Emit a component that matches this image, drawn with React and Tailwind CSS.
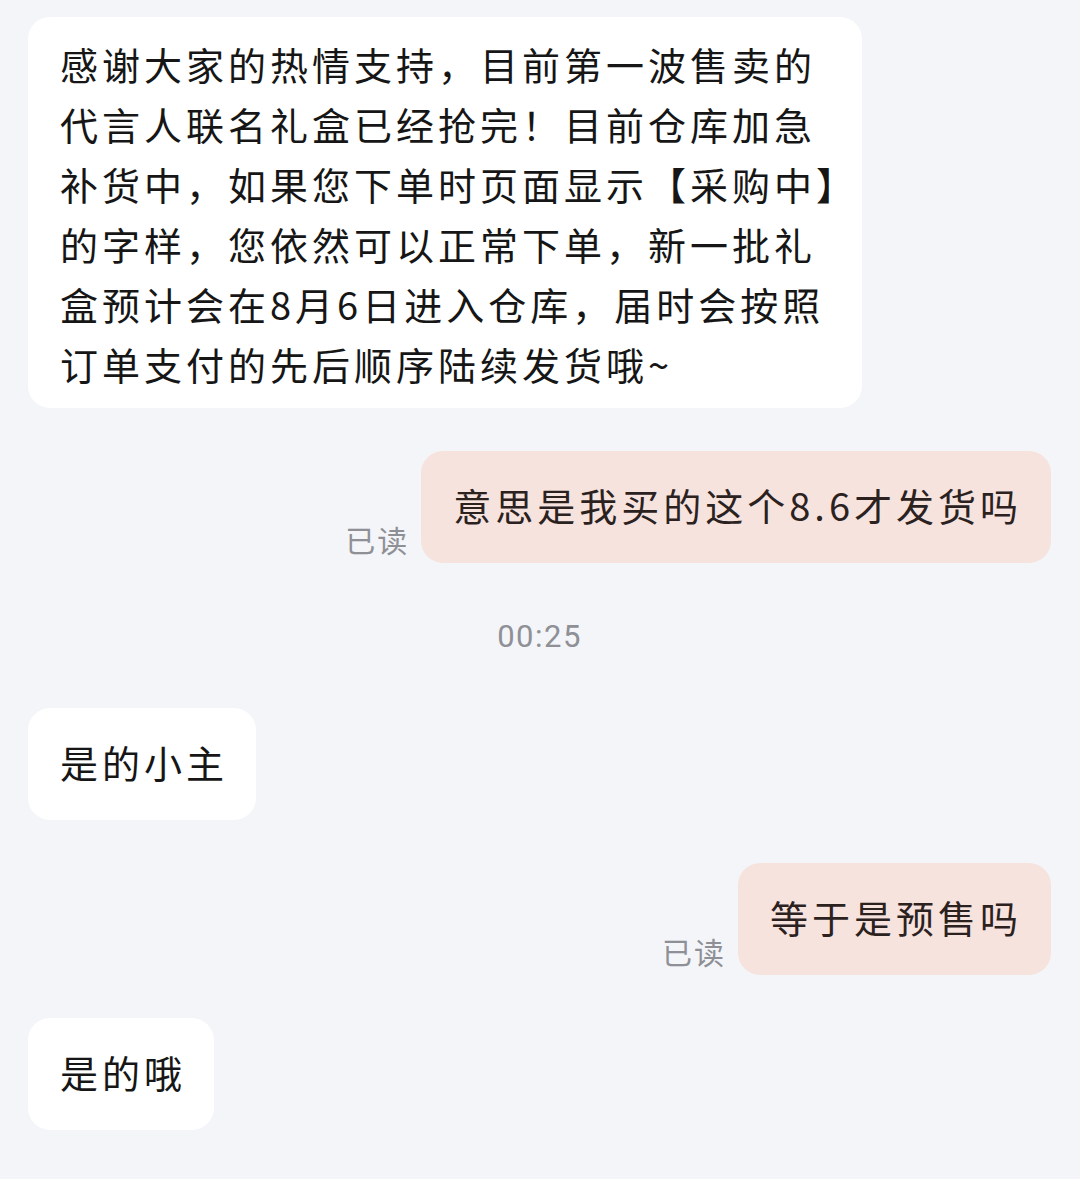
const font = { fontFamily: '"Noto Sans CJK SC", "Noto Sans", sans-serif' };

function Left({ children }) {
  return (
    <div className="flex">
      <div className="bg-white rounded-[22px] pl-8 pr-[28px] pt-[24px] pb-[28px] text-[38px] leading-[60px] tracking-[4px] text-[#161616] whitespace-nowrap">
        {children}
      </div>
    </div>
  );
}

function Right({ children }) {
  return (
    <div className="flex justify-end items-end gap-[12px]">
      <span className="text-[30px] leading-[40px] text-[#8e9096] tracking-[2px] mb-[4px]">已读</span>
      <div className="bg-[#f7e3dd] rounded-[22px] pl-[32px] pr-[29px] pt-[24px] pb-[28px] text-[38px] leading-[60px] tracking-[4px] text-[#2b221f] whitespace-nowrap">
        {children}
      </div>
    </div>
  );
}

export default function App() {
  const lines = [
    "感谢大家的热情支持，目前第一波售卖的",
    "代言人联名礼盒已经抢完！目前仓库加急",
    "补货中，如果您下单时页面显示【采购中】",
    "的字样，您依然可以正常下单，新一批礼",
    "盒预计会在8月6日进入仓库，届时会按照",
    "订单支付的先后顺序陆续发货哦~",
  ];

  return (
    <div className="min-h-[1179px] w-[1080px] bg-[#f4f5f9] pl-7 pr-[29px] pt-[17px]" style={font}>
      <div className="flex">
        <div className="bg-white rounded-[22px] pl-8 pr-6 pt-[17px] pb-[14px] text-[38px] leading-[60px] tracking-[4px] text-[#161616] w-[834px]">
          {lines.map((l) => (
            <div key={l} className="whitespace-nowrap">{l}</div>
          ))}
        </div>
      </div>

      <div className="mt-[43px]">
        <Right>意思是我买的这个8.6才发货吗</Right>
      </div>

      <div className="mt-[54px] text-center text-[31px] leading-[40px] text-[#8e9096] tracking-[1.5px]" style={{ fontFamily: 'Roboto, "Noto Sans", sans-serif' }}>
        00:25
      </div>

      <div className="mt-[51px]">
        <Left>是的小主</Left>
      </div>

      <div className="mt-[43px]">
        <Right>等于是预售吗</Right>
      </div>

      <div className="mt-[43px]">
        <Left>是的哦</Left>
      </div>
    </div>
  );
}
